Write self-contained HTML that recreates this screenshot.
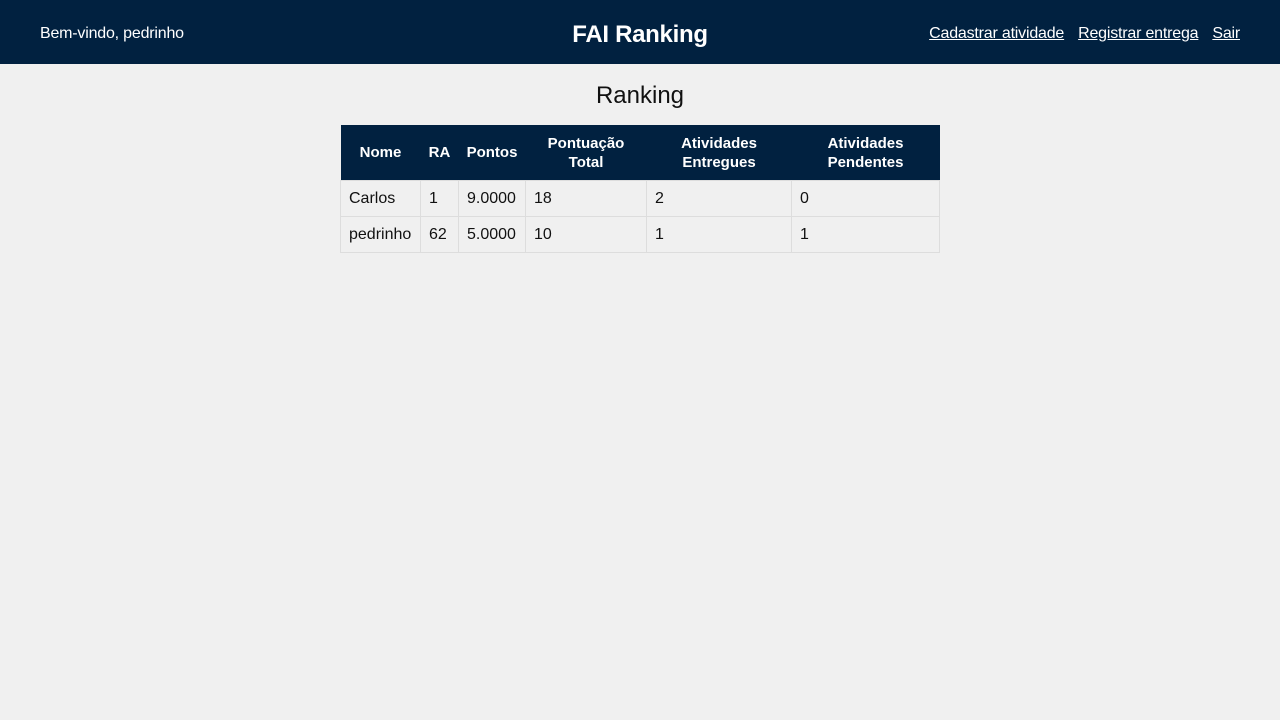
<!DOCTYPE html>
<html><head><meta charset="utf-8"><style>
html,body{margin:0;padding:0;}
body{width:1280px;height:720px;background:#f0f0f0;font-family:"Liberation Sans",sans-serif;color:#111;overflow:hidden;}
header{height:64px;background:#012140;color:#fff;position:relative;}
.l{position:absolute;left:40px;top:25px;font-size:16px;letter-spacing:-0.2px;}
.t{position:absolute;left:0;right:0;top:21px;text-align:center;font-size:24px;font-weight:bold;letter-spacing:-0.3px;}
.r{position:absolute;right:40px;top:25px;font-size:16px;letter-spacing:-0.2px;}
.r a{color:#fff;text-decoration:underline;margin-left:14px;}
h2{margin:0;position:absolute;top:82px;left:0;right:0;text-align:center;font-size:24px;font-weight:normal;}
table{position:absolute;left:340px;top:125px;width:599px;border-collapse:collapse;table-layout:fixed;font-size:16px;}
th{background:#012140;color:#fff;height:55px;padding:0 4px;font-size:15px;line-height:19px;font-weight:bold;text-align:center;}
td{height:34px;border:1px solid #ddd;padding:1px 8px 0;box-sizing:border-box;line-height:18px;}
tr.d{height:36px;}
</style></head><body>
<header><div class="l">Bem-vindo, pedrinho</div><div class="t">FAI Ranking</div>
<div class="r"><a>Cadastrar atividade</a><a>Registrar entrega</a><a>Sair</a></div></header>
<h2>Ranking</h2>
<table>
<colgroup><col style="width:80px"><col style="width:38px"><col style="width:67px"><col style="width:121px"><col style="width:145px"><col style="width:148px"></colgroup>
<tr><th>Nome</th><th>RA</th><th>Pontos</th><th>Pontuação Total</th><th>Atividades Entregues</th><th>Atividades Pendentes</th></tr>
<tr class="d"><td>Carlos</td><td>1</td><td>9.0000</td><td>18</td><td>2</td><td>0</td></tr>
<tr class="d"><td>pedrinho</td><td>62</td><td>5.0000</td><td>10</td><td>1</td><td>1</td></tr>
</table>
</body></html>
